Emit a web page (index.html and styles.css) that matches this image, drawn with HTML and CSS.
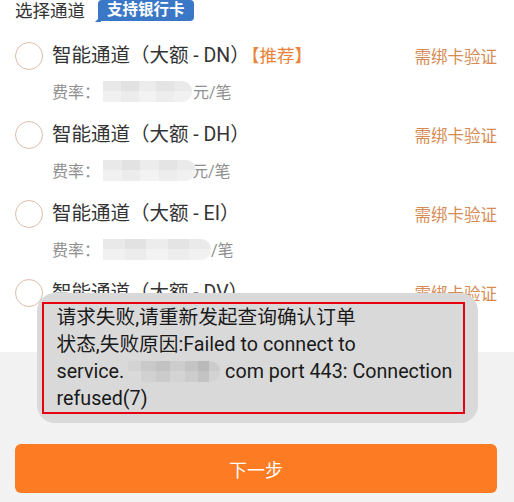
FILE: index.html
```html
<!DOCTYPE html>
<html lang="zh-CN">
<head>
<meta charset="utf-8">
<title>选择通道</title>
<link rel="stylesheet" href="styles.css">
</head>
<body>
<div class="page">
  <section class="channels">
    <div class="head">
      <span class="head-title">选择通道</span>
      <span class="badge">支持银行卡</span>
    </div>
    <ul class="list">
      <li class="item">
        <div class="item-main">
          <span class="radio"></span>
          <span class="name">智能通道（大额 - DN）<em class="tag">【推荐】</em></span>
          <span class="verify">需绑卡验证</span>
        </div>
        <div class="fee">费率：<span class="mask mask-a"></span>元/笔</div>
      </li>
      <li class="item">
        <div class="item-main">
          <span class="radio"></span>
          <span class="name">智能通道（大额 - DH）</span>
          <span class="verify">需绑卡验证</span>
        </div>
        <div class="fee">费率：<span class="mask mask-b"></span><span class="unit-cut">元/笔</span></div>
      </li>
      <li class="item">
        <div class="item-main">
          <span class="radio"></span>
          <span class="name">智能通道（大额 - EI）</span>
          <span class="verify">需绑卡验证</span>
        </div>
        <div class="fee">费率：<span class="mask mask-c"></span>/笔</div>
      </li>
      <li class="item">
        <div class="item-main">
          <span class="radio"></span>
          <span class="name">智能通道（大额 - DV）</span>
          <span class="verify">需绑卡验证</span>
        </div>
        <div class="fee">费率：<span class="mask mask-a"></span>元/笔</div>
      </li>
    </ul>
  </section>
  <footer class="footer">
    <button class="next" type="button">下一步</button>
  </footer>
  <div class="toast">
    <div class="toast-frame">
      <div class="line">请求失败,请重新发起查询确认订单</div>
      <div class="line">状态,失败原因:Failed to connect to</div>
      <div class="line">service.<span class="mask mask-toast"></span> com port 443: Connection</div>
      <div class="line">refused(7)</div>
    </div>
  </div>
</div>
</body>
</html>
```

FILE: styles.css
```css
html, body {
  margin: 0;
  padding: 0;
}

body {
  width: 514px;
  height: 502px;
  overflow: hidden;
  background: #ffffff;
  font-family: Roboto, "Noto Sans CJK SC", sans-serif;
  color: #333333;
}

.page {
  position: relative;
  width: 514px;
  height: 502px;
}

.channels {
  height: 352px;
  overflow: hidden;
  background: #ffffff;
}

.head {
  display: flex;
  align-items: center;
  height: 22px;
  padding-left: 15px;
  gap: 13px;
}

.head-title {
  font-size: 17.5px;
  line-height: 22px;
  color: #333333;
}

.badge {
  position: relative;
  align-self: flex-start;
  height: 21px;
  line-height: 21px;
  padding: 0 9px;
  background: #3a77c6;
  color: #ffffff;
  font-weight: bold;
  font-size: 15.5px;
  border-radius: 4px 4px 4px 0;
}

.badge::before {
  content: "";
  position: absolute;
  left: -3px;
  bottom: -1px;
  width: 0;
  height: 0;
  border-right: 6px solid #3a77c6;
  border-top: 6px solid transparent;
}

.list {
  list-style: none;
  margin: 0;
  padding: 18px 0 0 0;
}

.item {
  padding-bottom: 17px;
}

.item-main {
  display: flex;
  align-items: center;
  height: 32px;
  padding: 0 17px 0 15px;
}

.radio {
  flex: none;
  box-sizing: border-box;
  width: 28px;
  height: 28px;
  border: 1.5px solid #dcbcab;
  border-radius: 50%;
  margin-right: 9px;
}

.name {
  flex: 1;
  font-size: 19.5px;
  line-height: 32px;
  color: #333333;
  white-space: nowrap;
}

.tag {
  font-style: normal;
  font-size: 17.5px;
  color: #e8843c;
  margin-left: 1px;
}

.verify {
  font-size: 16.5px;
  color: #d68b54;
  white-space: nowrap;
}

.fee {
  display: flex;
  align-items: center;
  height: 22px;
  margin-top: 8px;
  padding-left: 52px;
  font-size: 16px;
  color: #8f8f8f;
  white-space: nowrap;
}

.mask {
  display: inline-block;
  height: 21px;
  border-radius: 0 10px 10px 0;
  background-image:
    linear-gradient(180deg, rgba(255,255,255,0) 0 50%, rgba(255,255,255,0.35) 50% 100%),
    linear-gradient(90deg, #e9e9e9 0 20%, #e2e2e2 20% 40%, #ececec 40% 60%, #e4e4e4 60% 80%, #eaeaea 80% 100%);
}

.mask-a {
  width: 89px;
  margin: 0 1px 0 3px;
}

.mask-b {
  width: 93px;
  margin-left: 3px;
  position: relative;
  z-index: 1;
}

.unit-cut {
  margin-left: -4px;
}

.mask-c {
  width: 108px;
  margin: 0 0 0 3px;
}

.footer {
  box-sizing: border-box;
  height: 150px;
  padding: 92px 17px 0 15px;
  background: #f2f2f2;
}

.next {
  display: block;
  width: 100%;
  height: 49px;
  border: none;
  border-radius: 6px;
  background: #fd7b22;
  color: #ffffff;
  font-family: Roboto, "Noto Sans CJK SC", sans-serif;
  font-size: 18px;
  padding: 0;
}

.toast {
  position: absolute;
  left: 37px;
  top: 293px;
  box-sizing: border-box;
  width: 441px;
  height: 130px;
  padding: 9px 13px 0 5px;
  border-radius: 18px;
  background: #d9d9d9;
}

.toast-frame {
  box-sizing: border-box;
  height: 112px;
  border: 2.5px solid #e60012;
  padding: 0 0 0 12.5px;
  font-size: 19.7px;
  line-height: 27px;
  color: #1a1a1a;
}

.line {
  white-space: nowrap;
}

.mask-toast {
  width: 92px;
  height: 21px;
  vertical-align: -4px;
  margin-left: 4px;
  border-radius: 0 10px 10px 0;
  background-image:
    linear-gradient(180deg, rgba(255,255,255,0) 0 50%, rgba(255,255,255,0.15) 50% 100%),
    linear-gradient(90deg, #d3d3d3 0 14%, #c9c9c9 14% 30%, #c2c2c2 30% 46%, #cdcdcd 46% 62%, #c4c4c4 62% 76%, #b9b9b9 76% 88%, #cbcbcb 88% 100%);
}
```
